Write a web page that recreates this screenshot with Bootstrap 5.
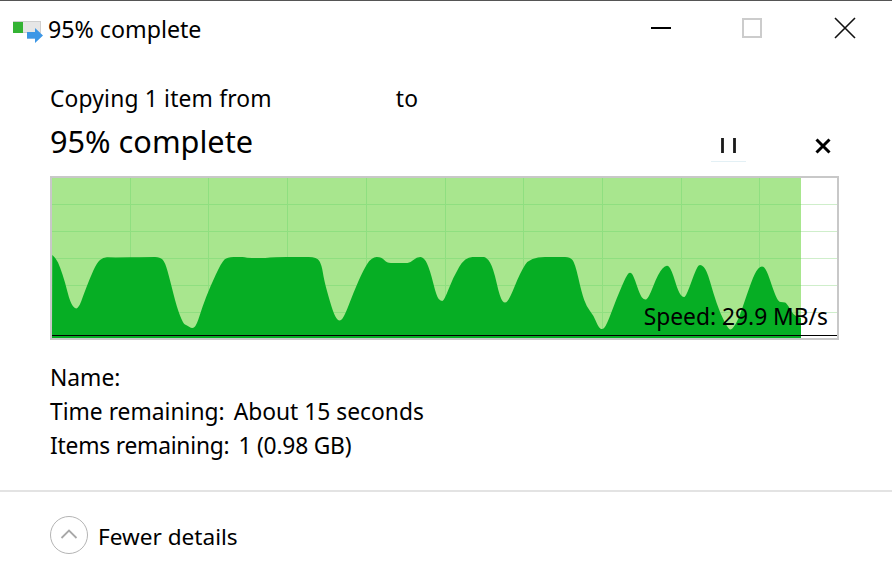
<!DOCTYPE html>
<html lang="en"><head><meta charset="utf-8"><title>95% complete</title>
<link href="https://cdn.jsdelivr.net/npm/bootstrap@5.3.0/dist/css/bootstrap.min.css" rel="stylesheet">
<style>
html,body{height:578px;overflow:hidden;background:#fff}
body{font-family:"Noto Sans","Open Sans",sans-serif;color:#000;font-size:22.8px;line-height:34px;border-top:1px solid #555}
.tbar{height:57px;padding:0 32px 0 13px}
.tbar-title{margin:0 0 2px 1px;font-size:23.2px}
.wctl{width:30px;height:30px}
.wctls{gap:62px;align-self:flex-start;margin-top:12px}
.wrap{padding:24px 53px 0 50px}
.copyline{letter-spacing:.18px}
.headline{font-size:30.7px;line-height:40px;margin-bottom:4px}
.headrow{margin-top:5px}
.stopx{margin:6px 6px 0 66px}
.graph{position:relative;width:789px;height:164px;margin-top:11px}
.graph svg{display:block}
.speed{position:absolute;right:11px;bottom:6px;line-height:34px}
.dlabels{margin-top:21px}
.drow{column-gap:9px}
.items-row{letter-spacing:-.22px}
.footbar{position:absolute;left:0;right:0;top:490px;border-top:2px solid #e3e3e3;padding:24px 0 0 50px}
.roundbtn{width:38px;height:38px;margin-right:10px}
.fewer{margin-top:3px;font-size:22.6px}
.gap-name{width:124px}
</style></head><body>
<div class="tbar d-flex align-items-center">
  <svg width="34" height="27" viewBox="0 0 34 27" aria-hidden="true"><rect x=".5" y="5.5" width="27" height="11" fill="#e6e6e6" stroke="#cfcfcf"/><rect y="6" width="10" height="11" fill="#34b334"/><path d="M14 16h8v-4l8 7.5-8 7.5v-4h-8z" fill="#3d97e6"/><rect x="14" y="22" width="8" height="1" fill="#7db5e8"/></svg>
  <span class="tbar-title">95% complete</span>
  <div class="ms-auto d-flex wctls">
    <svg class="wctl" viewBox="0 0 30 30" aria-hidden="true"><path d="M5 15h20" stroke="#000" stroke-width="2"/></svg>
    <svg class="wctl" viewBox="0 0 30 30" aria-hidden="true"><rect x="5" y="6" width="18" height="18" fill="none" stroke="#ccc" stroke-width="2"/></svg>
    <svg class="wctl" viewBox="0 0 30 30" aria-hidden="true"><path d="M5 5l20 20M25 5L5 25" stroke="#111" stroke-width="1.6" fill="none"/></svg>
  </div>
</div>
<div class="wrap">
  <div class="d-flex copyline"><span>Copying 1 item from</span><span class="gap-name"></span><span>to</span></div>
  <div class="d-flex align-items-center justify-content-between headrow">
    <span class="headline">95% complete</span>
    <div class="d-flex align-items-center">
      <svg width="36" height="40" viewBox="0 0 36 40" aria-hidden="true"><path d="M11.5 15v15M23.5 15v15" stroke="#1a1a1a" stroke-width="2.8"/><path d="M0 38.5h35" stroke="#e3f0f5"/></svg>
      <svg class="stopx" width="20" height="20" viewBox="0 0 20 20" aria-hidden="true"><path d="M3.5 3.5l13 13M16.5 3.5l-13 13" stroke="#000" stroke-width="3"/></svg>
    </div>
  </div>
  <div class="graph">
    <svg id="chart" width="789" height="164" viewBox="50 176 789 164" aria-hidden="true"></svg>
    <div class="speed">Speed: 29.9 MB/s</div>
  </div>
  <div class="dlabels">
    <div>Name:</div>
    <div class="d-flex drow"><span>Time remaining:</span><span>About 15 seconds</span></div>
    <div class="d-flex drow items-row"><span>Items remaining:</span><span>1 (0.98 GB)</span></div>
  </div>
</div>
<div class="footbar d-flex align-items-center">
  <svg class="roundbtn" viewBox="0 0 38 38" aria-hidden="true"><circle cx="19" cy="19" r="18.5" fill="#fff" stroke="#b4b4b4"/><path d="M11.5 22l7.5-7.5 7.5 7.5" fill="none" stroke="#a8a8a8" stroke-width="1.8"/></svg>
  <span class="fewer">Fewer details</span>
</div>
<script>
var p=[[52.3,255],[56,258],[60,267],[65,282],[70,302],[75.7,310],[80,305],[82.7,297],[90,278],[96.7,263],[103.3,257],[112,257.5],[150,257],[160,257],[165,262],[170,280],[176.7,307],[183.3,324],[186.7,325],[192.3,329],[196.7,325],[202.3,307],[210,287],[221.7,262],[227.3,257],[240,257],[245,257],[247,258],[266.7,258],[273.3,257],[300,257],[317,257],[321.7,265],[324,280],[330,302],[335,317],[340,322],[345,315],[353.3,293],[363.3,270],[371.7,257],[381.7,257],[386.7,263],[395,263],[405,263],[410,263],[416.7,257],[424,257],[430,270],[436.7,297],[440.7,301],[444,301],[453.3,277],[465,257],[480,257],[486.7,257],[493.3,268],[500,298],[505,304],[510,298],[520,273],[530,257],[560,257],[570,257],[575,263],[581.7,293],[586.7,307],[593.3,315],[598.3,327],[602.3,330],[606.7,325],[616.7,298],[626.7,275],[630,272],[633.3,275],[640,295],[644,300],[648.3,299],[658.3,273],[666.7,264],[671.7,270],[678.3,292],[683.3,298],[686.7,295],[696.7,267],[700.7,264],[706.7,270],[713.3,293],[720,313],[728.3,329],[731.7,330],[738.3,320],[746.7,295],[755,272],[761.7,265],[766.7,270],[773.3,290],[778.3,302],[783.3,302],[786.7,303],[793.3,315],[801,318]];
var d='M52 335L'+p[0][0]+' '+p[0][1];
for(var i=1;i<p.length-1;i++){var mx=(p[i][0]+p[i+1][0])/2,my=(p[i][1]+p[i+1][1])/2;d+='Q'+p[i][0]+' '+p[i][1]+' '+mx+' '+my;}
d+='L801 318V335Z';
var g='';
[204,231,258,285,312].forEach(function(y){g+='<rect x="52" y="'+y+'" width="785" height="1" fill="#cfeecb"/><rect x="52" y="'+y+'" width="749" height="1" fill="#8fdf80"/>';});
var v='';
[130,208,287,366,445,523,602,681,759].forEach(function(x){v+='<rect x="'+x+'" y="178" width="1" height="160" fill="#8fdf80"/>';});
document.getElementById('chart').innerHTML=
'<rect x="50" y="176" width="789" height="164" fill="#c8c8c8"/><rect x="52" y="178" width="785" height="160" fill="#fff"/>'+
'<rect x="52" y="178" width="749" height="160" fill="#a8e68e"/>'+g+v+
'<path d="'+d+'" fill="#06ae24"/><rect x="52" y="335" width="785" height="1" fill="#000"/><rect x="52" y="336" width="749" height="2" fill="#06ae24"/>';
</script>
</body></html>
